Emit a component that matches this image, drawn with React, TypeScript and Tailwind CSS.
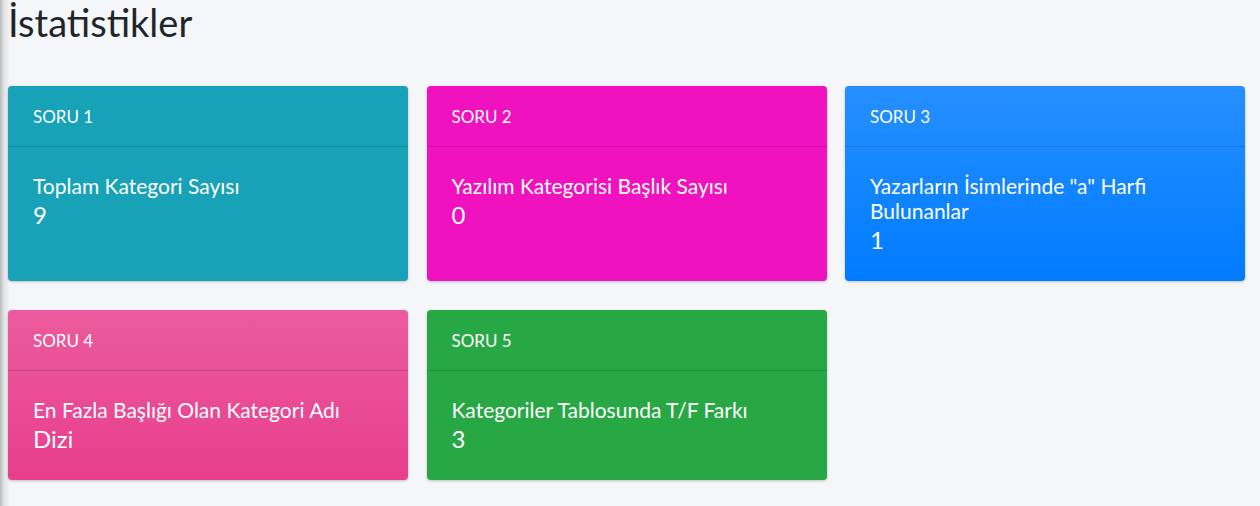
import React from "react";

type Card = {
  label: string;
  title: string;
  value: string;
  bg: string;
};

const cards: Card[] = [
  { label: "SORU 1", title: "Toplam Kategori Sayısı", value: "9", bg: "bg-[#17a2b8]" },
  { label: "SORU 2", title: "Yazılım Kategorisi Başlık Sayısı", value: "0", bg: "bg-[#f012be]" },
  {
    label: "SORU 3",
    title: "Yazarların İsimlerinde \"a\" Harfi Bulunanlar",
    value: "1",
    bg: "bg-[linear-gradient(180deg,#268fff,#007bff)]",
  },
  {
    label: "SORU 4",
    title: "En Fazla Başlığı Olan Kategori Adı",
    value: "Dizi",
    bg: "bg-[linear-gradient(180deg,#eb5b9d,#e83e8c)]",
  },
  { label: "SORU 5", title: "Kategoriler Tablosunda T/F Farkı", value: "3", bg: "bg-[#28a745]" },
];

function StatCard({ card }: { card: Card }) {
  return (
    <div
      className={`${card.bg} flex flex-col rounded-[4px] text-white shadow-[0_0_1px_rgba(0,0,0,0.125),0_1px_3px_rgba(0,0,0,0.2)]`}
    >
      <div className="h-[61px] flex items-center px-[25px] border-b border-[rgba(0,0,0,0.125)] text-[17px] leading-[30px] pt-[1px]">
        {card.label}
      </div>
      <div className="flex-1 px-[25px] pt-[26px] pb-[26px]">
        <div className="text-[21px] leading-[25px]">{card.title}</div>
        <div className="mt-[2px] text-[24px] leading-[30px]">{card.value}</div>
      </div>
    </div>
  );
}

export default function App() {
  return (
    <div
      className="min-h-[506px] bg-[#f4f6f9] bg-[linear-gradient(90deg,rgba(0,0,0,0.24)_0px,rgba(0,0,0,0.08)_4px,rgba(0,0,0,0)_10px)] text-[#212529] pl-[8px] pr-[15px]"
      style={{ fontFamily: "Lato, 'Open Sans', 'Liberation Sans', sans-serif" }}
    >
      <h1 className="text-[38px] leading-[44px] mb-[42px] font-normal">İstatistikler</h1>
      <div className="grid grid-cols-3 gap-x-[18.5px] gap-y-[29px]">
        {cards.map((c) => (
          <StatCard key={c.label} card={c} />
        ))}
      </div>
    </div>
  );
}
